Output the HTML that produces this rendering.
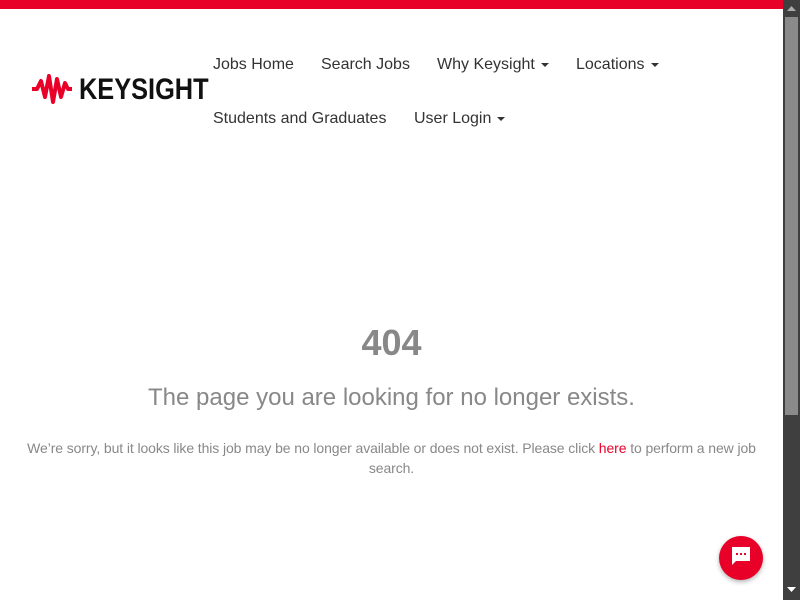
<!DOCTYPE html>
<html><head><style>
body{margin:0;width:800px;height:600px;overflow:hidden;font-family:"Liberation Sans",sans-serif;background:#fff;position:relative}
.top{position:absolute;left:0;top:0;width:783px;height:9px;background:#e90029}
.sb{position:absolute;left:783px;top:0;width:17px;height:600px;background:#3f3f3f}
.thumb{position:absolute;left:785px;top:17px;width:13px;height:398px;background:#8a8a8a}
.nav a{position:absolute;font-size:16px;color:#333;text-decoration:none;white-space:nowrap}
.car{display:inline-block;width:0;height:0;border-left:4px solid transparent;border-right:4px solid transparent;border-top:4px solid #333;vertical-align:middle;margin-left:6px}
.logo{position:absolute;left:79px;top:73px;font-size:30px;font-weight:bold;color:#111;transform:scaleX(0.845);transform-origin:0 0}
h1{position:absolute;left:0;width:783px;top:322px;margin:0;text-align:center;font-size:36px;color:#888;font-weight:bold}
h2{position:absolute;left:0;width:783px;top:384px;margin:0;text-align:center;font-size:24px;color:#888;font-weight:normal}
p{position:absolute;left:20px;width:743px;top:438px;margin:0;text-align:center;font-size:14px;line-height:20px;color:#888;letter-spacing:-0.1px}
p a{color:#e90029;text-decoration:none}
.chat{position:absolute;left:719px;top:536px;width:44px;height:44px;border-radius:50%;background:#e90029;box-shadow:0 2px 5px rgba(0,0,0,.3)}
</style></head><body>
<div class="top"></div>
<svg style="position:absolute;left:31px;top:73px" width="42" height="32" viewBox="0 0 42 32"><path d="M1 16 L6 16 L10 8 L14 24 L18 3 L22 29 L26 6 L30 24 L34 10 L37 16 L41 16" fill="none" stroke="#e90029" stroke-width="4" stroke-linejoin="round"/></svg>
<div class="logo">KEYSIGHT</div>
<div class="nav">
<a style="left:213px;top:56px">Jobs Home</a>
<a style="left:321px;top:56px">Search Jobs</a>
<a style="left:437px;top:56px">Why Keysight<span class="car"></span></a>
<a style="left:576px;top:56px">Locations<span class="car"></span></a>
<a style="left:213px;top:110px">Students and Graduates</a>
<a style="left:414px;top:110px">User Login<span class="car"></span></a>
</div>
<h1>404</h1>
<h2>The page you are looking for no longer exists.</h2>
<p>We’re sorry, but it looks like this job may be no longer available or does not exist. Please click <a>here</a> to perform a new job search.</p>
<div class="chat"><svg style="position:absolute;left:11px;top:9px" width="22" height="22" viewBox="0 0 22 22"><path d="M2 2 H20 V16 H6 L2 20 Z" fill="#fff"/><rect x="6" y="8" width="2" height="2" fill="#e90029"/><rect x="10" y="8" width="2" height="2" fill="#e90029"/><rect x="14" y="8" width="2" height="2" fill="#e90029"/></svg></div>
<div class="sb"></div><div class="thumb"></div>
<svg style="position:absolute;left:785px;top:4px" width="13" height="8"><path d="M2 7 L6.5 2 L11 7Z" fill="#aaa"/></svg>
<svg style="position:absolute;left:785px;top:586px" width="13" height="8"><path d="M2 1 L6.5 6 L11 1Z" fill="#fff"/></svg>
</body></html>
